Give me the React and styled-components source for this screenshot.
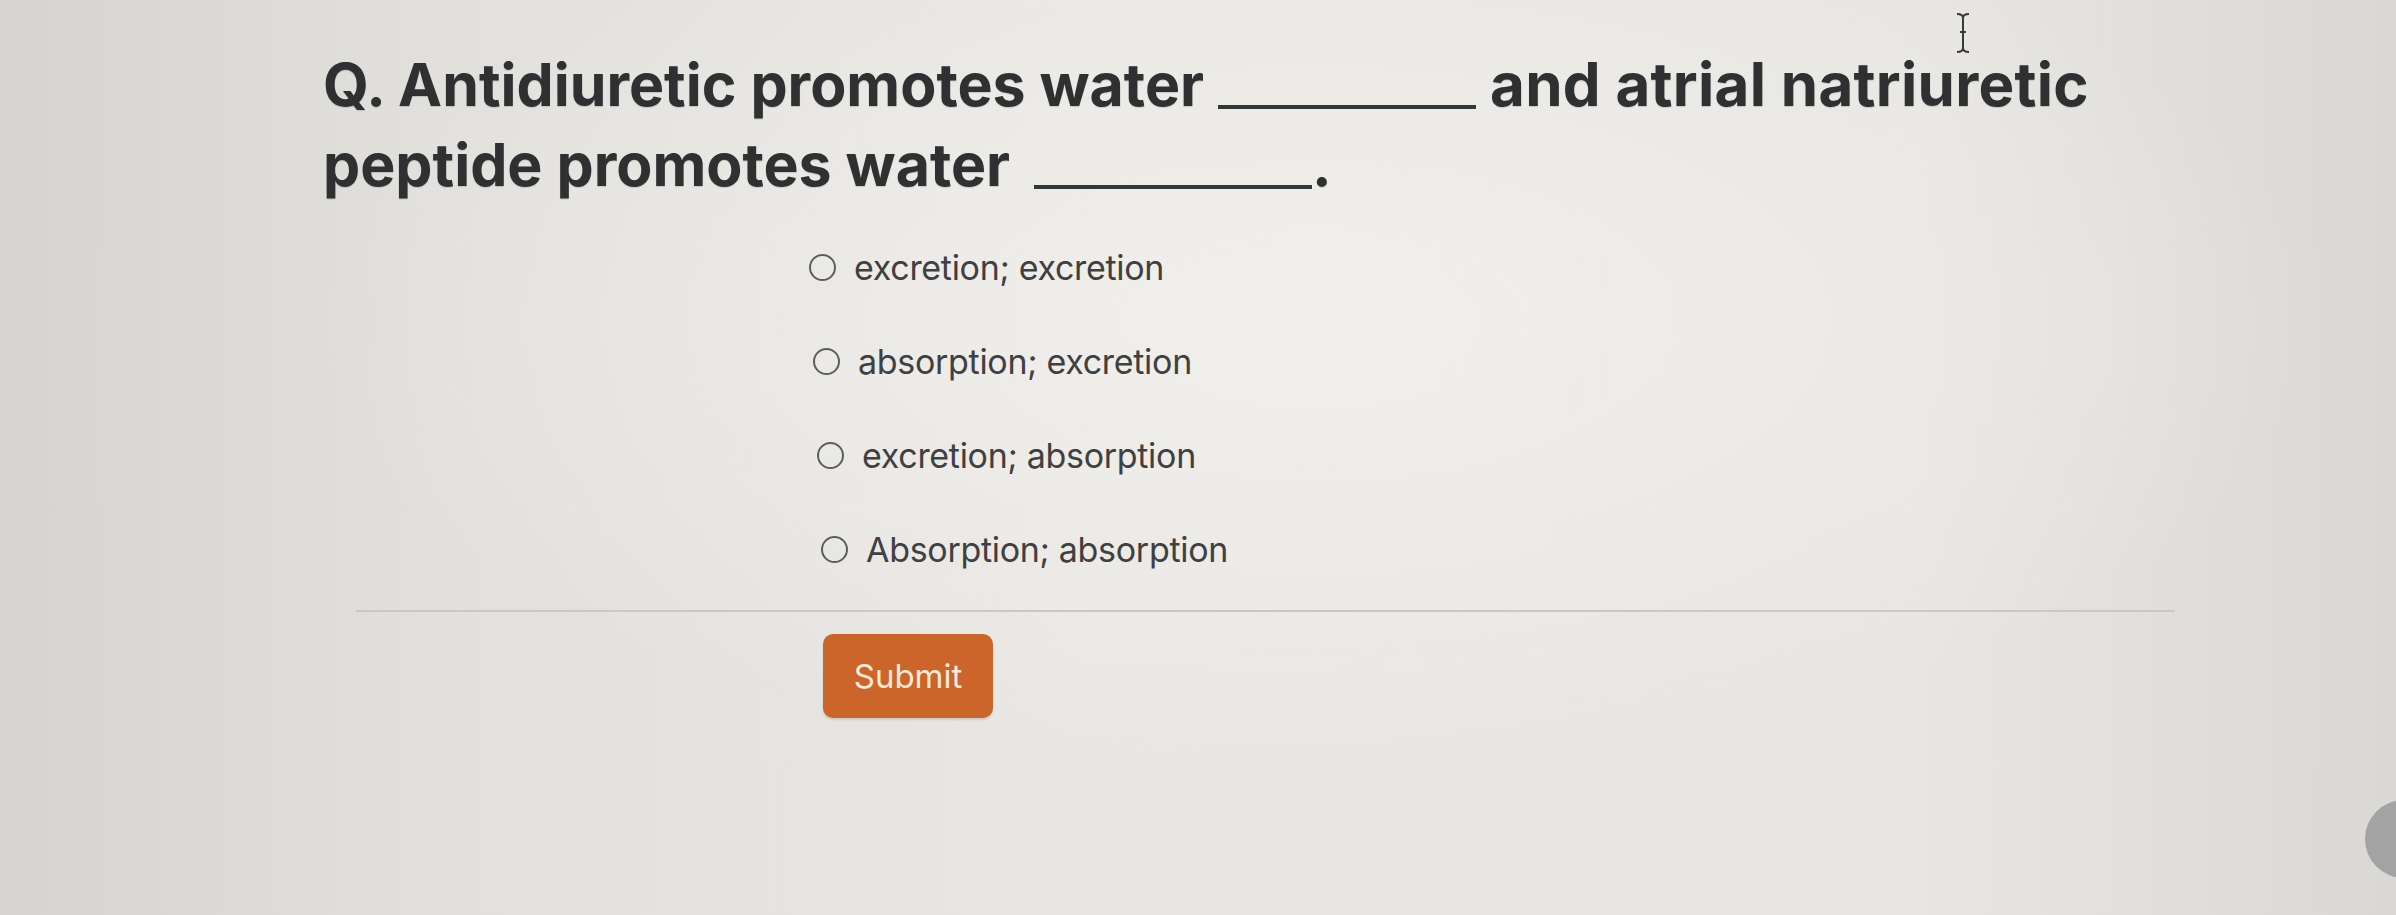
import React from 'react';
import styled, { createGlobalStyle } from 'styled-components';

const GlobalStyle = createGlobalStyle`
  html, body {
    margin: 0;
    padding: 0;
  }
  body {
    font-family: Inter, "Liberation Sans", sans-serif;
    background: #e4e2de;
  }
`;

const options = [
  'excretion; excretion',
  'absorption; excretion',
  'excretion; absorption',
  'Absorption; absorption',
];

const App = () => {
  return (
    <Page>
      <GlobalStyle />
      <Card>
        <Question>
          Q. Antidiuretic promotes water <Blank $width={258} /> <Wide>and atrial natriuretic</Wide>
          <br />
          peptide promotes water <Blank $width={278} $gap={10} />.
        </Question>

        {/* answer choices */}
        <Options>
          {options.map((text, i) => (
            <Option key={text} $shift={i * 4}>
              <Radio type='radio' name='answer' />
              <OptionText>{text}</OptionText>
            </Option>
          ))}
        </Options>

        <Divider />

        <SubmitButton>Submit</SubmitButton>
      </Card>

      {/* text cursor and the grey blob at the edge of the photo */}
      <Cursor viewBox='0 0 16 42'>
        <path d='M2 2 Q8 2 8 6 Q8 2 14 2 M8 6 L8 36 M2 40 Q8 40 8 36 Q8 40 14 40 M5 20 L11 20' stroke='#3a3a3a' strokeWidth='2' fill='none' />
      </Cursor>
      <Blob />
    </Page>
  );
};

export default App;

const Page = styled.div`
  position: relative;
  width: 2396px;
  height: 915px;
  overflow: hidden;
  background:
    radial-gradient(ellipse 60% 70% at 55% 35%, rgba(242, 240, 236, 0.9), rgba(242, 240, 236, 0) 70%),
    linear-gradient(90deg, #d6d4d0 0%, #e2e0dc 18%, #e9e7e3 45%, #e8e6e2 80%, #d9d8d5 100%);
`;

const Card = styled.div`
  display: flex;
  flex-direction: column;
  padding: 44px 0 0 323px;
`;

const Question = styled.h1`
  margin: 0;
  font-family: Inter, "Liberation Sans", sans-serif;
  font-weight: 700;
  font-size: 59px;
  line-height: 80px;
  letter-spacing: 0;
  color: #2e3032;
  text-shadow: 0 1px 1px rgba(0, 0, 0, 0.15);
`;

// right end of the photo is a bit closer to the camera
const Wide = styled.span`
  letter-spacing: 0.3px;
  font-size: 60px;
`;

const Blank = styled.span`
  display: inline-block;
  width: ${(p) => p.$width}px;
  height: 4px;
  margin-left: ${(p) => p.$gap || 0}px;
  background: #34373a;
  vertical-align: baseline;
  margin-bottom: -3px;
`;

const Options = styled.div`
  display: flex;
  flex-direction: column;
  margin-top: 15px;
  padding-left: 486px;
`;

const Option = styled.label`
  display: flex;
  align-items: center;
  gap: 18px;
  height: 94px;
  padding-left: ${(p) => p.$shift}px;
`;

const Radio = styled.input`
  appearance: none;
  margin: 0;
  width: 27px;
  height: 27px;
  border: 2.5px solid #5c5d5e;
  border-radius: 50%;
  background: transparent;
  box-sizing: border-box;
`;

const OptionText = styled.span`
  font-size: 34px;
  color: #3f4042;
  letter-spacing: -0.3px;
`;

const Divider = styled.div`
  margin: 14px 0 0 33px;
  width: 1819px;
  height: 2px;
  background: #c9c8c5;
`;

const SubmitButton = styled.button`
  align-self: flex-start;
  margin: 22px 0 0 500px;
  width: 170px;
  height: 84px;
  border: none;
  border-radius: 10px;
  background: #cc6529;
  color: #fbe9dc;
  font-family: Inter, "Liberation Sans", sans-serif;
  font-size: 33px;
  box-shadow: 0 2px 2px rgba(0, 0, 0, 0.12);
`;

const Cursor = styled.svg`
  position: absolute;
  left: 1955px;
  top: 12px;
  width: 16px;
  height: 42px;
`;

const Blob = styled.div`
  position: absolute;
  left: 2365px;
  top: 800px;
  width: 78px;
  height: 78px;
  border-radius: 50%;
  background: #a3a3a3;
`;
